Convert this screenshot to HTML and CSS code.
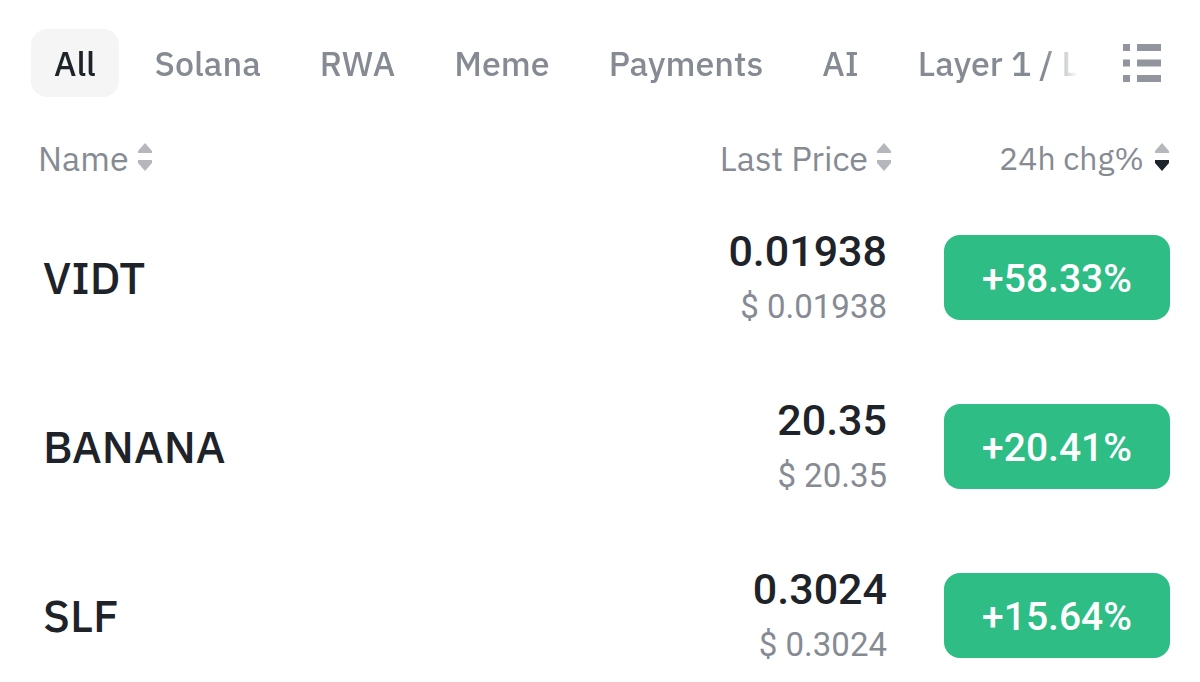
FILE: index.html
```html
<!DOCTYPE html>
<html lang="en">
<head>
<meta charset="utf-8">
<meta name="viewport" content="width=device-width, initial-scale=1">
<title>Markets</title>
<link rel="stylesheet" href="styles.css">
</head>
<body>
<main class="market">
  <nav class="filters" aria-label="Categories">
    <div class="tabs">
      <button class="tab tab-active" type="button">All</button>
      <button class="tab" type="button">Solana</button>
      <button class="tab" type="button">RWA</button>
      <button class="tab" type="button">Meme</button>
      <button class="tab" type="button">Payments</button>
      <button class="tab" type="button">AI</button>
      <button class="tab tab-last" type="button">Layer 1 / L</button>
    </div>
    <button class="list-button" type="button" aria-label="All categories">
      <svg width="40" height="40" viewBox="0 0 40 40" fill="currentColor" aria-hidden="true"><path d="M1 1h7v7H1zM15 1h24v7H15zM1 16.500h7v7H1zM15 16.500h24v7H15zM1 32h7v7H1zM15 32h24v7H15z"/></svg>
    </button>
  </nav>
  <table class="coins">
    <thead>
      <tr>
        <th class="name"><button class="sort" type="button">Name<svg width="16" height="30" viewBox="0 0 16 30" aria-hidden="true"><path class="arrow" d="M8 0l7 8v2H1v-2z"/><path class="arrow" d="M8 28l7-8v-3H1v3z"/></svg></button></th>
        <th class="price"><button class="sort" type="button">Last Price<svg width="16" height="30" viewBox="0 0 16 30" aria-hidden="true"><path class="arrow" d="M8 0l7 8v2H1v-2z"/><path class="arrow" d="M8 28l7-8v-3H1v3z"/></svg></button></th>
        <th class="change"><button class="sort" type="button">24h chg%<svg width="16" height="30" viewBox="0 0 16 30" aria-hidden="true"><path class="arrow" d="M8 0l7 8v2H1v-2z"/><path class="arrow arrow-on" d="M8 28l7-8v-3H1v3z"/></svg></button></th>
      </tr>
    </thead>
    <tbody>
      <tr><td class="name">VIDT</td><td class="price"><div class="last">0.01938</div><div class="fiat">$ 0.01938</div></td><td class="change"><button class="badge" type="button">+58.33%</button></td></tr>
      <tr><td class="name">BANANA</td><td class="price"><div class="last">20.35</div><div class="fiat">$ 20.35</div></td><td class="change"><button class="badge" type="button">+20.41%</button></td></tr>
      <tr><td class="name">SLF</td><td class="price"><div class="last">0.3024</div><div class="fiat">$ 0.3024</div></td><td class="change"><button class="badge" type="button">+15.64%</button></td></tr>
    </tbody>
  </table>
</main>
</body>
</html>
```
FILE: styles.css
```css
* { box-sizing: border-box; }
body { margin: 0; background: #fff; color: #1e2329; font-family: "IBM Plex Sans", "Noto Sans", sans-serif; }
button { border: 0; padding: 0; background: none; font: inherit; color: inherit; white-space: nowrap; cursor: pointer; }
svg { display: block; flex: none; }
.market { padding: 29px 30px 0 31px; }
.filters { display: flex; justify-content: space-between; align-items: center; }
.tabs { display: flex; gap: 13px; flex: 1; min-width: 0; overflow: hidden; margin-right: 32px; -webkit-mask-image: linear-gradient(to left, transparent 12px, #000 44px); mask-image: linear-gradient(to left, transparent 12px, #000 44px); }
.tab { flex: none; height: 68px; padding: 0 23px; border-radius: 16px; font-size: 34px; font-weight: 500; line-height: 40px; color: #868b93; }
.tab-active { background: #f5f5f5; color: #1e2329; }
.tab-last { padding-right: 0; }
.list-button { flex: none; margin-right: 8px; color: #92959e; }
.coins { width: 100%; border-collapse: collapse; table-layout: fixed; }
th, td { padding: 0; text-align: right; font-weight: 400; }
th { height: 96px; padding-top: 41px; vertical-align: top; }
.price { width: 300px; }
.change { width: 278px; }
.sort { display: inline-flex; align-items: center; gap: 8px; font-size: 34px; line-height: 40px; color: #868b93; }
.change .sort { font-size: 32px; gap: 10px; }
.arrow { fill: #b5b7bd; }
.arrow-on { fill: #1e2329; }
.name { text-align: left; }
th.name { padding-left: 7px; }
td { height: 169px; vertical-align: middle; }
td.name { padding-left: 12px; padding-bottom: 2px; font-size: 45px; font-weight: 500; line-height: 56px; }
td.price { padding-right: 5px; padding-top: 2px; }
.last { font: 500 43px/56px Roboto, sans-serif; }
.fiat { font: 400 33px/56px Roboto, sans-serif; color: #868b93; }
.badge { width: 226px; height: 85px; padding-top: 2px; border-radius: 16px; background: #2ebd85; color: #fff; font: 500 39px/48px Roboto, sans-serif; }
```
